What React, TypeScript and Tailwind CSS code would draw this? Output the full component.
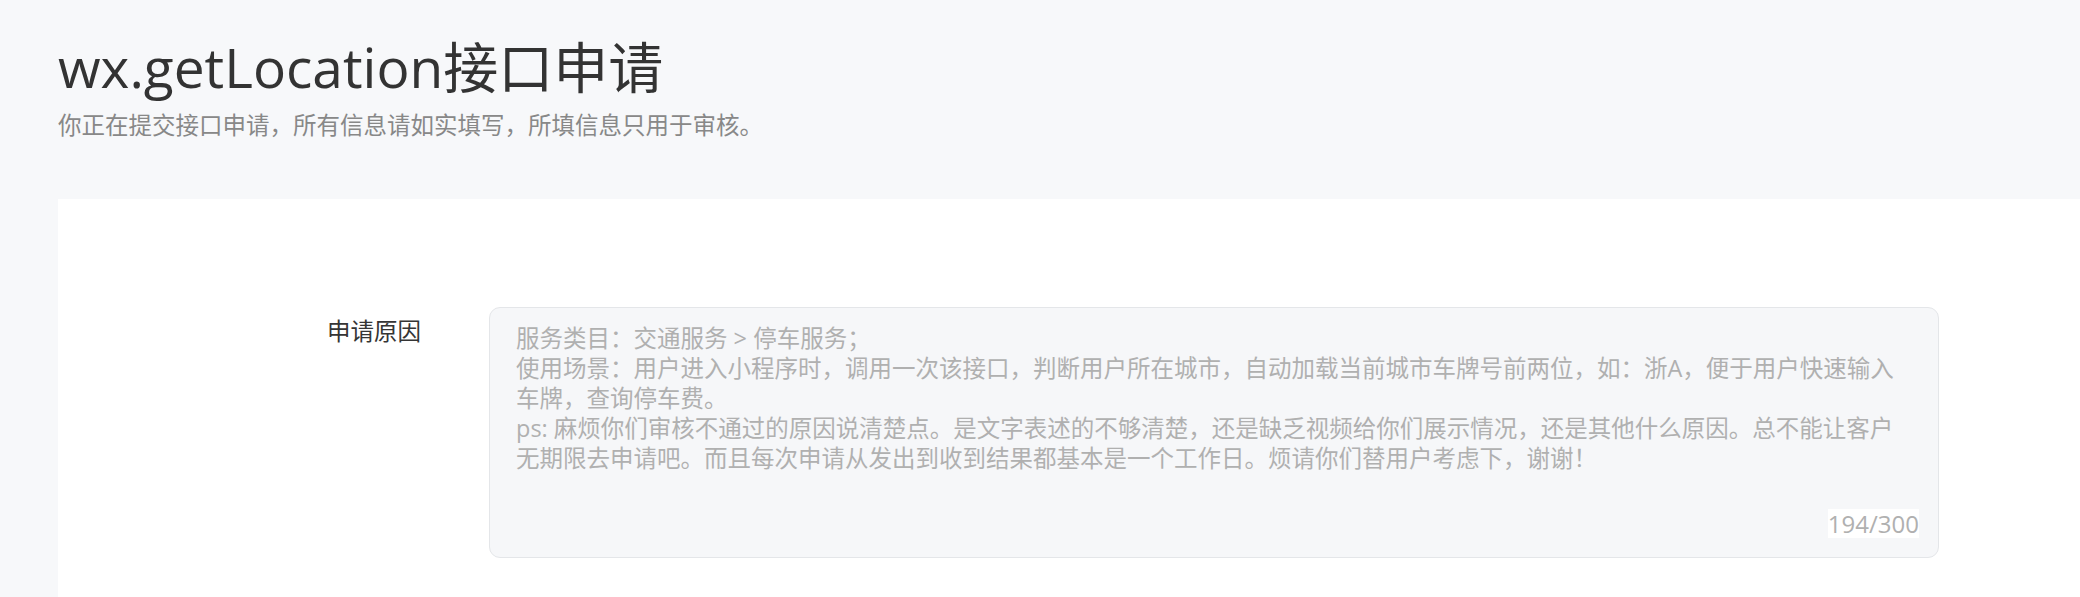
import React from "react";

const TEXT =
  "服务类目：交通服务 > 停车服务；\n使用场景：用户进入小程序时，调用一次该接口，判断用户所在城市，自动加载当前城市车牌号前两位，如：浙A，便于用户快速输入车牌，查询停车费。\nps: 麻烦你们审核不通过的原因说清楚点。是文字表述的不够清楚，还是缺乏视频给你们展示情况，还是其他什么原因。总不能让客户无期限去申请吧。而且每次申请从发出到收到结果都基本是一个工作日。烦请你们替用户考虑下，谢谢！";

export default function App() {
  return (
    <div
      className="min-h-screen bg-[#f7f8fa] pl-[58px] font-['Open_Sans','Noto_Sans_CJK_SC',sans-serif]"
    >
      <header className="pt-[29px]">
        <h1 className="text-[55px] leading-[76px] font-normal text-[#333333]">
          wx.getLocation接口申请
        </h1>
        <p className="mt-[4px] text-[23.5px] leading-[32px] text-[#888888]">
          你正在提交接口申请，所有信息请如实填写，所填信息只用于审核。
        </p>
      </header>
      <section className="mt-[58px] flex h-[400px] items-start bg-white pl-[269px] pt-[108px]">
        <label className="mt-[9px] w-[162px] shrink-0 text-[23.5px] leading-[30px] text-[#353535]">
          申请原因
        </label>
        <div className="relative h-[251px] w-[1450px] shrink-0 rounded-[11px] border border-[#e4e6e9] bg-[#f6f7f9] px-[26px] pt-[15px] text-[23.5px] leading-[30px] text-[#b0b0b0] whitespace-pre-wrap">
          {TEXT}
          <span className="absolute bottom-[19px] right-[19px] bg-white text-[24px] leading-[29px] text-[#b0b0b0]">
            194/300
          </span>
        </div>
      </section>
    </div>
  );
}
